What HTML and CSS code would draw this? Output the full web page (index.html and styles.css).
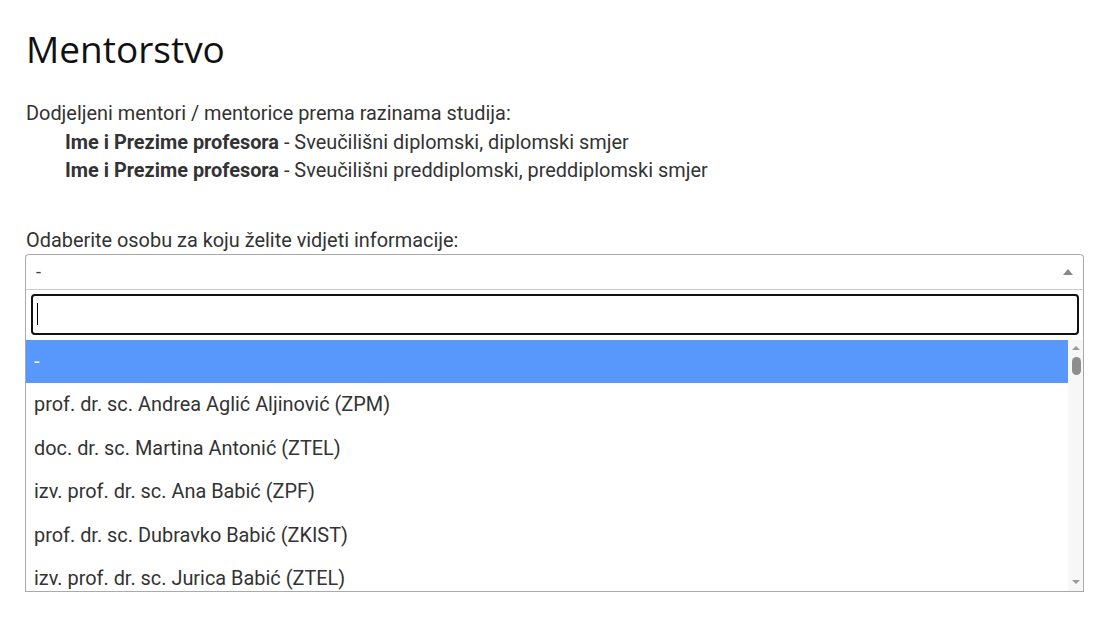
FILE: index.html
```html
<!DOCTYPE html>
<html lang="hr">
<head>
<meta charset="utf-8">
<title>Mentorstvo</title>
<link rel="stylesheet" href="styles.css">
</head>
<body>
<main class="page">
  <h1 class="title">Mentorstvo</h1>
  <div class="intro">
    <div>Dodjeljeni mentori / mentorice prema razinama studija:</div>
    <div class="level"><b>Ime i Prezime profesora</b> - Sveučilišni diplomski, diplomski smjer</div>
    <div class="level"><b>Ime i Prezime profesora</b> - Sveučilišni preddiplomski, preddiplomski smjer</div>
  </div>
  <label class="label">Odaberite osobu za koju želite vidjeti informacije:</label>
  <div class="select">
    <div class="select-box">
      <span class="selected">-</span>
      <span class="arrow"></span>
    </div>
    <div class="dropdown">
      <div class="search"><div class="search-input"><span class="caret"></span></div></div>
      <div class="results">
        <ul class="options">
          <li class="option active">-</li>
          <li class="option">prof. dr. sc. Andrea Aglić Aljinović (ZPM)</li>
          <li class="option">doc. dr. sc. Martina Antonić (ZTEL)</li>
          <li class="option">izv. prof. dr. sc. Ana Babić (ZPF)</li>
          <li class="option">prof. dr. sc. Dubravko Babić (ZKIST)</li>
          <li class="option">izv. prof. dr. sc. Jurica Babić (ZTEL)</li>
        </ul>
        <div class="scrollbar">
          <span class="sb-up"></span>
          <span class="sb-thumb"></span>
          <span class="sb-fill"></span>
          <span class="sb-down"></span>
        </div>
      </div>
    </div>
  </div>
</main>
</body>
</html>
```

FILE: styles.css
```css
html, body {
  margin: 0;
  padding: 0;
  background: #fff;
}
.page {
  padding: 26px 22px 0 25px;
  font-family: Roboto, "Liberation Sans", sans-serif;
  font-size: 19.9px;
  color: #333;
}
.title {
  margin: 0 0 0 1px;
  font-family: "Open Sans", "Liberation Sans", sans-serif;
  font-weight: 400;
  font-size: 37px;
  line-height: 46px;
  color: #111;
}
.intro {
  margin-top: 28px;
  line-height: 28.5px;
  padding-left: 1px;
}
.level {
  padding-left: 39px;
}
.level b {
  font-weight: 700;
}
.label {
  display: block;
  margin-top: 42px;
  padding-left: 1px;
  line-height: 26px;
}
.select {
  width: 1059px;
}
.select-box {
  height: 34px;
  border: 1px solid #aaa;
  border-bottom-color: #ccc;
  border-radius: 4px 4px 0 0;
  display: flex;
  align-items: center;
  justify-content: space-between;
  padding: 0 10px 0 10px;
}
.selected {
  font-size: 18px;
  color: #444;
}
.arrow {
  width: 0;
  height: 0;
  border-style: solid;
  border-width: 0 5px 6px 5px;
  border-color: transparent transparent #888 transparent;
}
.dropdown {
  border: 1px solid #aaa;
  border-top: none;
  background: #fff;
}
.search {
  padding: 4px 4px 5px 5px;
}
.search-input {
  height: 37px;
  border: 2px solid #111;
  border-radius: 4px;
  display: flex;
  align-items: center;
  padding-left: 4px;
}
.caret {
  width: 1px;
  height: 22px;
  background: #000;
}
.results {
  display: flex;
  height: 251px;
}
.options {
  list-style: none;
  margin: 0;
  padding: 0;
  flex: 1;
  overflow: hidden;
}
.option {
  height: 43.5px;
  box-sizing: border-box;
  padding: 0 8px;
  display: flex;
  align-items: center;
  line-height: 27px;
  color: #333;
}
.option.active {
  background: #5897fb;
  color: #fff;
}
.scrollbar {
  width: 14px;
  background: #f7f7f7;
  display: flex;
  flex-direction: column;
  align-items: center;
  padding: 6px 0 7px 1px;
}
.sb-up {
  width: 0;
  height: 0;
  border-style: solid;
  border-width: 0 4px 4px 4px;
  border-color: transparent transparent #999 transparent;
}
.sb-thumb {
  margin-top: 7px;
  width: 9px;
  height: 18px;
  border-radius: 5px;
  background: #8e8e8e;
}
.sb-fill {
  flex: 1;
}
.sb-down {
  width: 0;
  height: 0;
  border-style: solid;
  border-width: 4px 4px 0 4px;
  border-color: #999 transparent transparent transparent;
}
```
